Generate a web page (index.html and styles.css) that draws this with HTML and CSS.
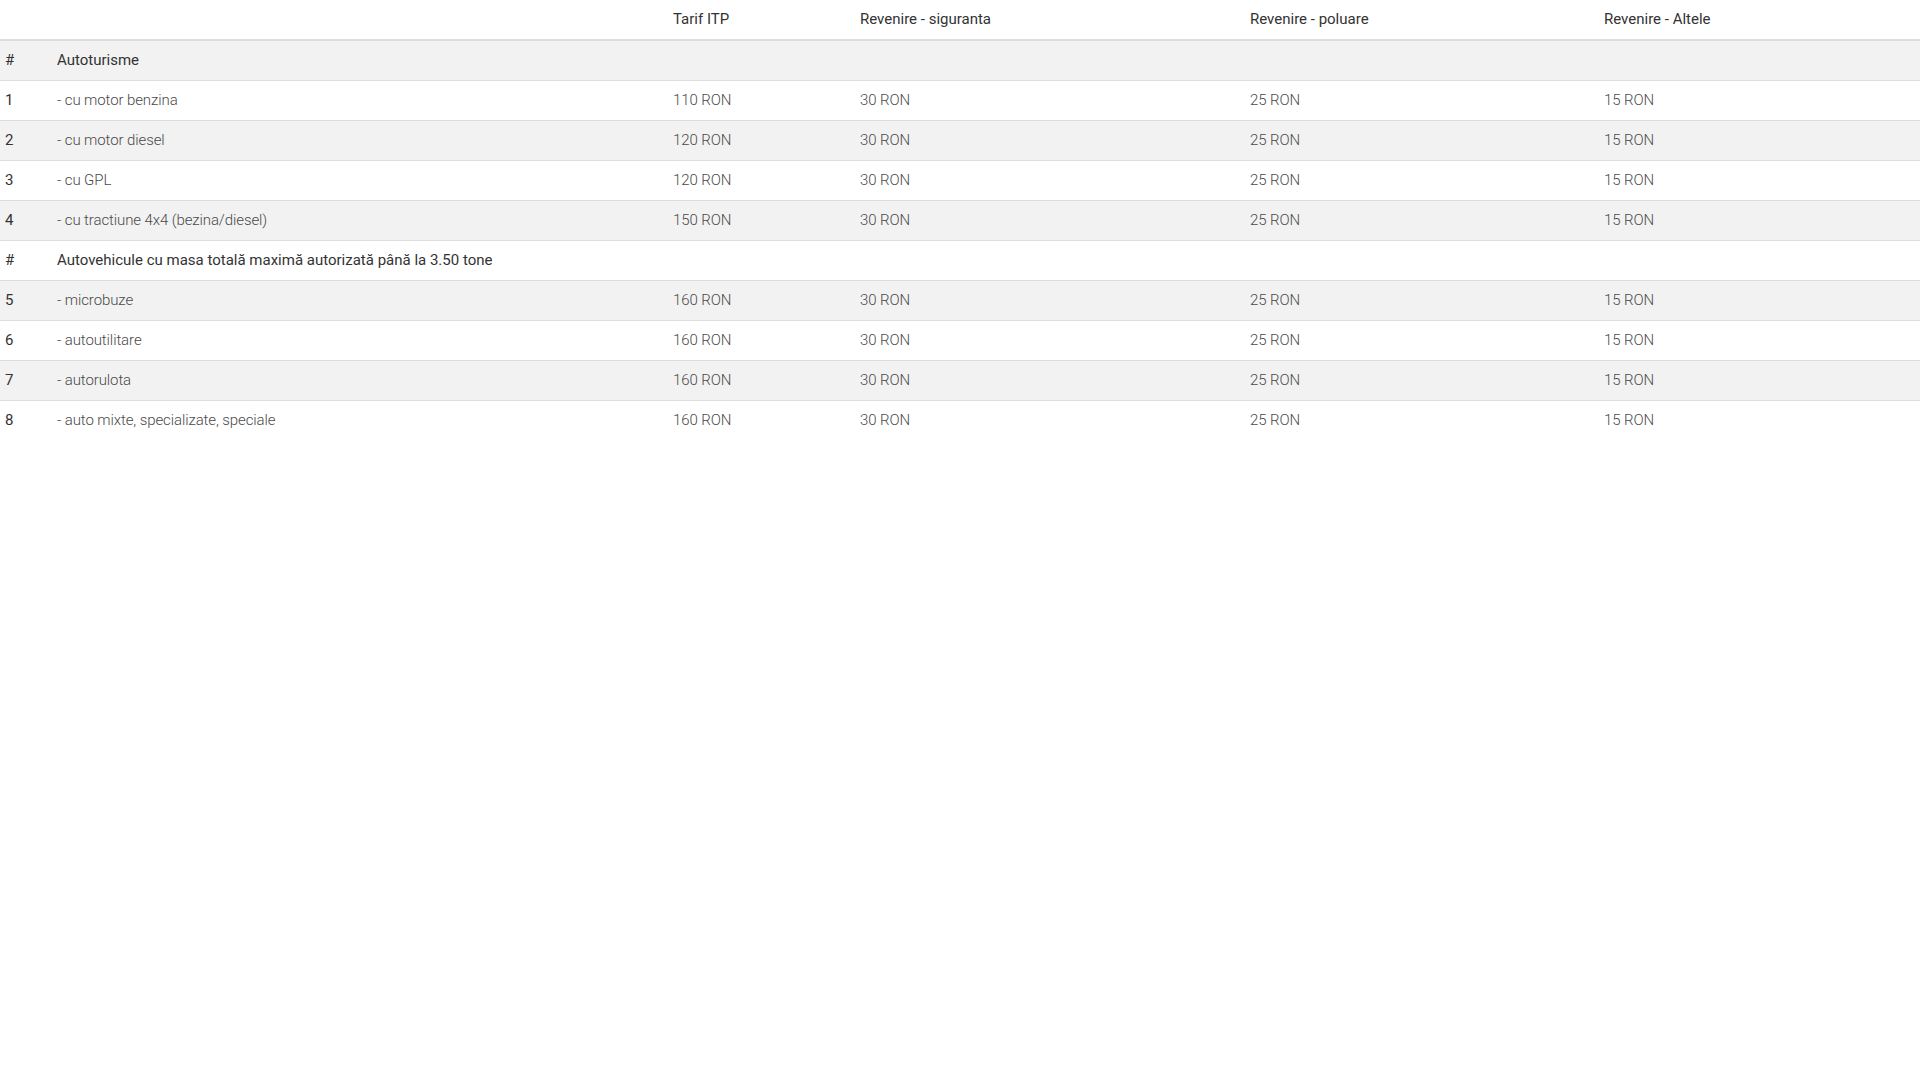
FILE: index.html
```html
<!DOCTYPE html>
<html lang="ro">
<head>
<meta charset="utf-8">
<title>Tarife ITP</title>
<link rel="stylesheet" href="styles.css">
</head>
<body>
<table class="prices">
  <colgroup>
    <col class="c-num">
    <col class="c-name">
    <col class="c-itp">
    <col class="c-sig">
    <col class="c-pol">
    <col class="c-alt">
  </colgroup>
  <thead>
    <tr>
      <th></th>
      <th></th>
      <th>Tarif ITP</th>
      <th>Revenire - siguranta</th>
      <th>Revenire - poluare</th>
      <th>Revenire - Altele</th>
    </tr>
  </thead>
  <tbody>
    <tr class="group"><td class="idx">#</td><td>Autoturisme</td><td></td><td></td><td></td><td></td></tr>
    <tr><td class="idx">1</td><td>- cu motor benzina</td><td>110 RON</td><td>30 RON</td><td>25 RON</td><td>15 RON</td></tr>
    <tr><td class="idx">2</td><td>- cu motor diesel</td><td>120 RON</td><td>30 RON</td><td>25 RON</td><td>15 RON</td></tr>
    <tr><td class="idx">3</td><td>- cu GPL</td><td>120 RON</td><td>30 RON</td><td>25 RON</td><td>15 RON</td></tr>
    <tr><td class="idx">4</td><td>- cu tractiune 4x4 (bezina/diesel)</td><td>150 RON</td><td>30 RON</td><td>25 RON</td><td>15 RON</td></tr>
    <tr class="group"><td class="idx">#</td><td>Autovehicule cu masa totală maximă autorizată până la 3.50 tone</td><td></td><td></td><td></td><td></td></tr>
    <tr><td class="idx">5</td><td>- microbuze</td><td>160 RON</td><td>30 RON</td><td>25 RON</td><td>15 RON</td></tr>
    <tr><td class="idx">6</td><td>- autoutilitare</td><td>160 RON</td><td>30 RON</td><td>25 RON</td><td>15 RON</td></tr>
    <tr><td class="idx">7</td><td>- autorulota</td><td>160 RON</td><td>30 RON</td><td>25 RON</td><td>15 RON</td></tr>
    <tr><td class="idx">8</td><td>- auto mixte, specializate, speciale</td><td>160 RON</td><td>30 RON</td><td>25 RON</td><td>15 RON</td></tr>
  </tbody>
</table>
</body>
</html>
```

FILE: styles.css
```css
html, body {
  margin: 0;
  padding: 0;
  background: #fff;
}

body {
  font-family: Roboto, "Liberation Sans", Arial, sans-serif;
  font-size: 15px;
  line-height: 23px;
  color: #333;
}

.prices {
  width: 100%;
  border-collapse: collapse;
  border-spacing: 0;
  table-layout: fixed;
}

.c-num { width: 52px; }
.c-name { width: 616px; }
.c-itp { width: 187px; }
.c-sig { width: 390px; }
.c-pol { width: 354px; }
.c-alt { width: auto; }

.prices th,
.prices td {
  padding: 8px 5px;
  text-align: left;
  vertical-align: top;
  white-space: nowrap;
}

.prices th {
  font-weight: 400;
  color: #333;
  border-bottom: 2px solid #ddd;
}

.prices td {
  border-top: 1px solid #ddd;
  font-weight: 300;
  color: #4a4a4a;
  letter-spacing: -0.1px;
}

.prices thead + tbody tr:first-child td {
  border-top: 0;
}

.prices tbody tr:nth-child(odd) {
  background: #f2f2f2;
}

.prices td.idx {
  font-weight: 400;
  color: #333;
  letter-spacing: 0;
}

.prices tr.group td {
  font-weight: 400;
  color: #333;
  letter-spacing: 0;
}
```
